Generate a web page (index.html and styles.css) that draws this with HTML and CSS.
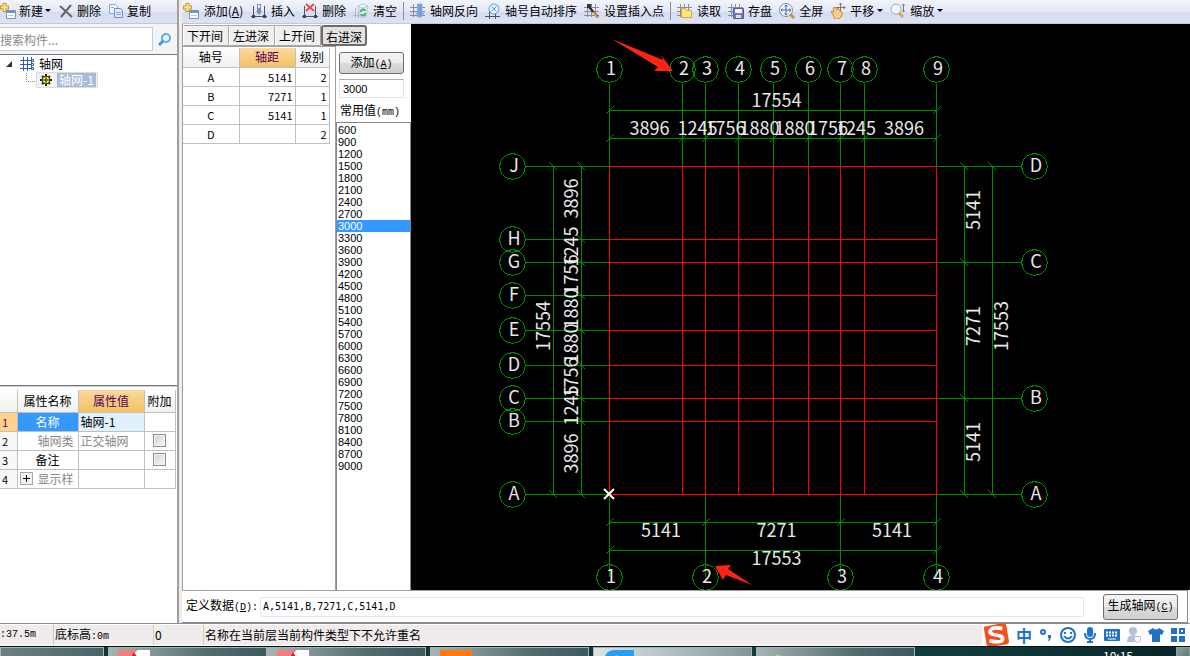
FILE: index.html
```html
<!DOCTYPE html>
<html lang="zh-CN">
<head>
    <meta charset="UTF-8">
    <meta name="viewport" content="width=device-width, initial-scale=1.0">
    <title>轴网</title>
    <link rel="stylesheet" href="styles.css">
</head>
<body>

    <!-- Shared toolbar shapes -->
    <svg class="symbols" width="0" height="0">
        <symbol id="grid" viewBox="0 0 16 16">
            <path d="M3.5 1v13M7.5 1v13M11.5 1v13M0 4.5h15M0 8.5h15M0 12.5h15" fill="none" stroke="#8b8d96"/>
        </symbol>
        <symbol id="new" viewBox="0 0 16 16">
            <path d="M4.5 0v9M0 4.5h9" stroke="#c79a2c" stroke-width="4"/>
            <path d="M4.5 1v7M1 4.5h7" stroke="#ffe68a" stroke-width="2"/>
            <path d="M6.5 7.5h9v8h-9z" fill="#fff" stroke="#7c91bd"/>
            <path d="M7 8h8v2H7z" fill="#6f93d8"/>
            <path d="M8 12.5h6" stroke="#b9c6e4"/>
        </symbol>
        <symbol id="axis" viewBox="0 0 16 16">
            <path d="M2.5 3v10M13.5 3v10M0 13.5h16" fill="none" stroke="#50545e"/>
            <path d="M1 12h3v3H1zM12 12h3v3h-3z" fill="#40444e"/>
        </symbol>
    </svg>

    <main class="app">
        <section class="side">
            <div class="toolbar side-toolbar">
                <button><svg class="icon"><use href="#new"/></svg>新建<i class="caret"></i></button>
                <button><svg class="icon" viewBox="0 0 16 16"><path d="M2 3l12 11M13 2L3 14" stroke="#666" stroke-width="2"/></svg>删除</button>
                <button><svg class="icon" viewBox="0 0 16 16"><path d="M1.5 1.5h6l2 2v7h-8z" fill="#eef5ff" stroke="#86a8d8"/><path d="M6.5 5.5h6l2 2v7h-8z" fill="#dfecff" stroke="#6d91cc"/><path d="M8 9.5h5M8 11.5h5M3 4.5h3" stroke="#86a8d8"/></svg>复制</button>
            </div>
            <div class="search">
                <input type="text" placeholder="搜索构件..." aria-label="搜索构件">
                <button aria-label="搜索"><svg class="icon" viewBox="0 0 16 16"><circle cx="9" cy="7" r="4" fill="#eaf6ff" stroke="#58b0e6" stroke-width="2"/><path d="M6 10l-4 4" stroke="#3c9add" stroke-width="3"/></svg></button>
            </div>
            <div class="tree">
                <div class="tree-row">
                    <svg class="twisty" viewBox="0 0 8 8"><path d="M7 1v6H1z" fill="#333"/></svg>
                    <svg class="icon tree-icon" viewBox="0 0 16 16"><path d="M4.5 1v14M8.5 1v14M12.5 1v11M1 4.5h12M1 8.5h12M1 12.5h12" stroke="#2c5cb0" fill="none"/><path d="M12.500 3.500h2v2h-2zM12.500 7.500h2v2h-2zM12.500 11.500h2v2h-2z" fill="#fff" stroke="#2c5cb0"/></svg>
                    <span>轴网</span>
                </div>
                <div class="tree-row child">
                    <svg class="branch" viewBox="0 0 10 14"><path d="M.5 0v8.500h9" fill="none" stroke="#888" stroke-dasharray="1 1"/></svg>
                    <div class="tree-item">
                        <svg viewBox="0 0 12 12"><path d="M6 0v12M0 6h12M2 2l8 8M10 2l-8 8" stroke="#222" stroke-width="2"/><circle cx="6" cy="6" r="4" fill="#f4ec20" stroke="#222"/><path d="M6 3v6M3 6h6" stroke="#222" stroke-dasharray="2 2"/><circle cx="6" cy="6" r="1" fill="#222"/></svg>
                        <span class="selected">轴网-1</span>
                    </div>
                </div>
            </div>
            <div class="props">
                <table>
                    <colgroup><col class="c-num"><col class="c-name"><col class="c-value"><col class="c-extra"></colgroup>
                    <thead>
                        <tr><th></th><th>属性名称</th><th class="hot">属性值</th><th>附加</th></tr>
                    </thead>
                    <tbody>
                        <tr><td class="num current">1</td><td class="name active">名称</td><td class="value editing">轴网-1</td><td></td></tr>
                        <tr class="muted"><td class="num">2</td><td class="name wide">轴网类</td><td class="value">正交轴网</td><td><input type="checkbox" aria-label="附加轴网类"></td></tr>
                        <tr><td class="num">3</td><td class="name">备注</td><td></td><td><input type="checkbox" aria-label="附加备注"></td></tr>
                        <tr class="muted"><td class="num">4</td><td class="name wide"><button class="expand" aria-label="展开"><svg viewBox="0 0 11 11"><path d="M2 5.500h7M5.500 2v7" stroke="#000"/></svg></button>显示样</td><td></td><td></td></tr>
                    </tbody>
                </table>
            </div>
        </section>

        <section class="work">
            <div class="toolbar">
                <button><svg class="icon"><use href="#new"/></svg><span class="add">添加(<u>A</u>)</span></button>
                <button><svg class="icon" viewBox="0 0 16 16"><use href="#axis"/><path d="M6 1h4v7h1l-3 4-3-4h1z" fill="#7390b8"/><path d="M7 2h2v3H7z" fill="#e8f0ff"/></svg>插入</button>
                <button><svg class="icon" viewBox="0 0 16 16"><use href="#axis"/><path d="M4 1l8 7M12 1L4 8" stroke="#f04848" stroke-width="2"/></svg>删除</button>
                <button><svg class="icon" viewBox="0 0 16 16"><path d="M2.500 5v10M0 12.500h8M5.500 8v7" stroke="#b4b8c4"/><path d="M5 3h10l-2 11H7z" fill="#d9e8ee" stroke="#b8ccd8"/><path d="M5 3l5-2 5 2-5 2z" fill="#f4faff" stroke="#b8ccd8"/><path d="M8 9a2 2 0 0 1 4-1M12 10a2 2 0 0 1-4 1" fill="none" stroke="#4ab860" stroke-width="2"/></svg>清空</button>
                <span class="sep"></span>
                <button><svg class="icon" viewBox="0 0 16 16"><use href="#grid"/><path d="M8 1h4v9h2l-4 5-4-5h2z" fill="#6d9be4" stroke="#8fb1ea"/></svg>轴网反向</button>
                <button><svg class="icon" viewBox="0 0 16 16"><path d="M4.500 8v8M10.500 10v6M0 13.500h15" stroke="#50545e"/><circle cx="9" cy="6" r="5" fill="#e7f3ff" stroke="#5d9ee0"/><path d="M6.500 3.500l5 5M11.500 3.500l-5 5" stroke="#5d9ee0"/></svg>轴号自动排序</button>
                <button><svg class="icon" viewBox="0 0 16 16"><use href="#grid"/><path d="M5 4l9 10" stroke="#222" stroke-width="2"/><path d="M9 9l5 6" stroke="#d8a050" stroke-width="2"/><path d="M3 1h4v4H3z" fill="#333"/></svg>设置插入点</button>
                <span class="sep"></span>
                <button><svg class="icon" viewBox="0 0 16 16"><use href="#grid"/><path d="M4.500 5.500h4l1 2h5v7h-10z" fill="#ffe27a" stroke="#d3a948"/></svg>读取</button>
                <button><svg class="icon" viewBox="0 0 16 16"><use href="#grid"/><path d="M5.500 5.500h10v10h-10z" fill="#7778bd" stroke="#5759a0"/><path d="M7 6h7v4H7z" fill="#f4f4ff"/><path d="M8 12h5v3H8z" fill="#ddd"/></svg>存盘</button>
                <button><svg class="icon" viewBox="0 0 16 16"><path d="M11 11l4 4" stroke="#c8963c" stroke-width="3"/><circle cx="7" cy="7" r="6.500" fill="#eef5ff" stroke="#8090b0"/><path d="M7 2v10M2 7h10M5.500 3.500L7 2l1.500 1.500M5.500 10.500L7 12l1.500-1.500M3.500 5.500L2 7l1.500 1.500M10.500 5.500L12 7l-1.500 1.500" fill="none" stroke="#3b6ab0"/></svg>全屏</button>
                <button><svg class="icon" viewBox="0 0 16 16"><path d="M10.500 0v9M6 4.500h9M9 1.500L10.500 0 12 1.500M13.500 3L15 4.500 13.500 6" fill="none" stroke="#777"/><path d="M1 8l3 1-1-4 2-1 2 3 1-2 2 3 2 1v4l-3 3H5z" fill="#f6cf86" stroke="#c29142"/></svg>平移<i class="caret"></i></button>
                <button><svg class="icon" viewBox="0 0 16 16"><path d="M9 10l4 4" stroke="#e0a850" stroke-width="3"/><circle cx="6" cy="6" r="5" fill="#f2f8ff" stroke="#9aabbf"/><path d="M13.500 1v8M12 2.500L13.500 1 15 2.500M12 7.500L13.500 9 15 7.500" fill="none" stroke="#68788a"/></svg>缩放<i class="caret"></i></button>
            </div>

            <div class="editor">
                <div class="axis-panel">
                    <div class="tabs">
                        <button>下开间</button>
                        <button>左进深</button>
                        <button>上开间</button>
                        <button class="pressed">右进深</button>
                    </div>
                    <div class="axis-body">
                        <div class="axis-table">
                            <table>
                                <colgroup><col class="a-no"><col class="a-dist"><col class="a-level"></colgroup>
                                <thead><tr><th>轴号</th><th class="hot">轴距</th><th>级别</th></tr></thead>
                                <tbody>
                                    <tr><td>A</td><td>5141</td><td>2</td></tr>
                                    <tr><td>B</td><td>7271</td><td>1</td></tr>
                                    <tr><td>C</td><td>5141</td><td>1</td></tr>
                                    <tr><td>D</td><td></td><td>2</td></tr>
                                </tbody>
                            </table>
                        </div>
                        <div class="presets">
                            <button class="push">添加<span class="half">(<u>A</u>)</span></button>
                            <input type="text" value="3000" aria-label="轴距">
                            <label for="presetList">常用值<span class="half">(mm)</span></label>
                            <select id="presetList" size="29">
                                <option>600</option>
                                <option>900</option>
                                <option>1200</option>
                                <option>1500</option>
                                <option>1800</option>
                                <option>2100</option>
                                <option>2400</option>
                                <option>2700</option>
                                <option selected>3000</option>
                                <option>3300</option>
                                <option>3600</option>
                                <option>3900</option>
                                <option>4200</option>
                                <option>4500</option>
                                <option>4800</option>
                                <option>5100</option>
                                <option>5400</option>
                                <option>5700</option>
                                <option>6000</option>
                                <option>6300</option>
                                <option>6600</option>
                                <option>6900</option>
                                <option>7200</option>
                                <option>7500</option>
                                <option>7800</option>
                                <option>8100</option>
                                <option>8400</option>
                                <option>8700</option>
                                <option>9000</option>
                            </select>
                        </div>
                    </div>
                </div>
                <div class="canvas">
                    <svg id="drawing"></svg>
                </div>
            </div>

            <div class="define">
                <label for="defineData">定义数据<span class="half">(<u>D</u>):</span></label>
                <input type="text" id="defineData" value="A,5141,B,7271,C,5141,D">
                <button class="push">生成轴网<span class="half">(<u>C</u>)</span></button>
            </div>
        </section>
    </main>

    <footer class="status">
        <span class="s-floor half">:37.5m</span>
        <span class="s-base">底标高<span class="half">:0m</span></span>
        <span class="s-count">0</span>
        <span class="s-message">名称在当前层当前构件类型下不允许重名</span>
        <div class="ime">
            <svg class="ime-logo" viewBox="0 0 28 28"><path d="M1 5l21-4q2 0 3 2l3 18q0 2-2 3L7 27q-2 0-3-2L1 7z" fill="#f4511e"/><path d="M21 7Q10 5 8 9t6 5q8 1 7 5T7 20" fill="none" stroke="#fff" stroke-width="4"/></svg>
            <span class="ime-lang">中</span>
            <svg viewBox="0 0 16 16"><circle cx="5" cy="5" r="2" fill="none" stroke="#1f72c8" stroke-width="2"/><path d="M10 8h3v3l-2 3h-1l1-3h-1z" fill="#1f72c8"/></svg>
            <svg viewBox="0 0 16 16"><circle cx="8" cy="8" r="7" fill="none" stroke="#1f72c8" stroke-width="2"/><path d="M5 5v2M11 5v2M4 9q4 5 8 0" fill="none" stroke="#1f72c8" stroke-width="2"/></svg>
            <svg viewBox="0 0 16 16"><rect x="5" y="0" width="6" height="10" rx="3" fill="#1f72c8"/><path d="M3 6q0 6 5 6t5-6M8 12v3M5 15h6" fill="none" stroke="#1f72c8" stroke-width="2"/></svg>
            <svg viewBox="0 0 16 16"><rect x="0" y="2" width="16" height="12" rx="1" fill="#1f72c8"/><path d="M2 5.500h12M2 8.500h12" stroke="#fff" stroke-width="2" stroke-dasharray="2 1"/><path d="M4 12h8" stroke="#fff"/></svg>
            <svg viewBox="0 0 16 16"><circle cx="7" cy="4" r="4" fill="#b4c1d6"/><path d="M1 15q0-7 6-7t6 7z" fill="#b4c1d6"/><path d="M8.500 9.500h6v3q0 2-3 3-3-1-3-3z" fill="#fff" stroke="#b4c1d6"/></svg>
            <svg viewBox="0 0 16 16"><path d="M5 1q3 3 6 0l5 3-2 4-2-1v8H4V7L2 8 0 4z" fill="#1f72c8"/></svg>
            <svg viewBox="0 0 16 16"><path d="M1 1h6v6H1zM1 9h6v6H1zM9 9h6v6H9z" fill="#1f72c8"/><path d="M10 2h4v4h-4z" fill="none" stroke="#1f72c8" stroke-width="2"/></svg>
        </div>
    </footer>

    <div class="taskbar">
        <div class="task first"></div>
        <div class="task-group">
            <div class="task"><svg viewBox="0 0 32 10"><path d="M0 0h32v10H0z" fill="#fff"/><path d="M0 0h20L8 10H0z" fill="#f08080"/><path d="M16 2l5 8H11z" fill="#d02818"/></svg></div>
            <div class="task"><svg viewBox="0 0 32 10"><path d="M0 0h32v10H0z" fill="#fff"/><path d="M0 0h20L8 10H0z" fill="#f08080"/><path d="M16 2l5 8H11z" fill="#d02818"/></svg></div>
        </div>
        <div class="task"><svg viewBox="0 0 32 10"><path d="M0 0h32v10H0z" fill="#ff7a10"/></svg></div>
        <div class="task bright"><svg viewBox="0 0 32 10"><path d="M1 10Q2 0 12 0h19v10z" fill="#2b9cf4"/><path d="M9 10q4-9 10 0z" fill="#e8f6ff"/></svg></div>
        <div class="task"><svg viewBox="0 0 32 10"><path d="M5 10q7-11 14 0z" fill="#9be25c"/></svg></div>
        <span class="clock">10:15</span>
        <div class="desktop"></div>
    </div>

    <script>
        const svg = document.getElementById('drawing');

        // axis positions on the canvas
        const topX = [198, 271, 294, 327, 362, 397, 429, 453, 525];
        const bottomX = [198, 294, 429, 525];
        const leftY = [142, 215, 238, 271, 306, 341, 374, 397, 470];
        const rightY = [142, 238, 374, 470];
        const left = 198, right = 525, top1 = 142, bottom = 470;

        function add(tag, cls, attrs, text) {
            const el = document.createElementNS('http://www.w3.org/2000/svg', tag);
            if (cls) el.setAttribute('class', cls);
            for (const key in attrs) el.setAttribute(key, attrs[key]);
            if (text) el.textContent = text;
            svg.appendChild(el);
        }

        function line(cls, x1, y1, x2, y2) {
            add('line', cls, { x1: x1 + 0.5, y1: y1 + 0.5, x2: x2 + 0.5, y2: y2 + 0.5 });
        }

        // axis bubble, a twelve-sided ring
        function bubble(x, y, name) {
            const points = [];
            for (let i = 0; i < 12; i++) {
                const a = i * Math.PI / 6;
                points.push((x + 0.5 + 13 * Math.cos(a)).toFixed(1) + ',' + (y + 0.5 + 13 * Math.sin(a)).toFixed(1));
            }
            add('polygon', 'green', { points: points.join(' ') });
            add('text', 'label', { x: x + 2, y: y + 6 }, name);
        }

        // dimension chain along x
        function dimX(xs, y, values, textY) {
            line('green', xs[0], y, xs[xs.length - 1], y);
            xs.forEach(x => line('green', x - 4, y + 4, x + 4, y - 4));
            values.forEach((v, i) => add('text', 'label', { x: (xs[i] + xs[i + 1]) / 2 + 4, y: textY }, v));
        }

        // dimension chain along y, text turned upwards
        function dimY(ys, x, values, textX) {
            line('green', x, ys[0], x, ys[ys.length - 1]);
            ys.forEach(y => line('green', x - 4, y - 4, x + 4, y + 4));
            values.forEach((v, i) => {
                const y = (ys[i] + ys[i + 1]) / 2 - 4;
                add('text', 'label', { transform: `translate(${textX} ${y}) rotate(-90)` }, v);
            });
        }

        topX.forEach((x, i) => {
            line('green', x, 59, x, top1);
            bubble(x, 45, String(i + 1));
        });
        bottomX.forEach((x, i) => {
            line('green', x, bottom, x, 552);
            bubble(x, 553, String(i + 1));
        });
        leftY.forEach((y, i) => {
            line('green', 114, y, left, y);
            bubble(101, y, 'JHGFEDCBA'[i]);
        });
        rightY.forEach((y, i) => {
            line('green', right, y, 610, y);
            bubble(623, y, 'DCBA'[i]);
        });

        const spans = ['3896', '1245', '1756', '1880', '1880', '1756', '1245', '3896'];
        dimX([left, right], 86, ['17554'], 83);
        dimX(topX, 114, spans, 111);
        dimX(bottomX, 498, ['5141', '7271', '5141'], 513);
        dimX([left, right], 526, ['17553'], 541);
        dimY([top1, bottom], 142, ['17554'], 139);
        dimY(leftY, 170, spans, 167);
        dimY(rightY, 553, ['5141', '7271', '5141'], 569);
        dimY([top1, bottom], 581, ['17553'], 597);

        topX.forEach(x => line('red', x, top1, x, bottom));
        leftY.forEach(y => line('red', left, y, right, y));

        // insertion point
        add('path', 'cross', { d: 'M193 465l10 10M203 465l-10 10' });

        // callout arrows
        add('polygon', 'arrow', { points: '201,15 252,36 250,31 262,47 243,47 247,43' });
        add('polygon', 'arrow', { points: '304,542 320,541 317,545 341,561 315,551 312,556' });
    </script>

</body>
</html>
```

FILE: styles.css
```css
* {
    box-sizing: border-box;
}
body {
    margin: 0;
    height: 100vh;
    display: flex;
    flex-direction: column;
    overflow: hidden;
    font-family: "Noto Sans CJK SC", sans-serif;
    font-size: 12px;
    line-height: 18px;
    color: #000;
    background: #f0eceb;
}
button, input, select {
    font: inherit;
    color: inherit;
    margin: 0;
    padding: 0;
}
button {
    border: none;
    background: none;
    white-space: nowrap;
}
svg {
    display: block;
    flex: none;
}
.symbols {
    position: absolute;
}
/* Half-width characters next to Chinese text */
.half {
    font-family: "Liberation Mono", monospace;
    font-size: 10px;
}
.app {
    flex: 1;
    min-height: 0;
    display: flex;
    border-bottom: 1px solid #8a8a90;
}

/* Toolbars */
.toolbar {
    flex: none;
    height: 24px;
    display: flex;
    align-items: center;
    gap: 7px;
    padding: 0 1px 2px;
    background: linear-gradient(#f2f4fb, #e3e8f6 50%, #d6dcf0 55%, #dee3f4);
    border-bottom: 1px solid #c4c8d4;
}
.side-toolbar {
    padding-left: 0;
}
.toolbar button {
    display: flex;
    align-items: center;
    gap: 4px;
}
.side-toolbar button {
    gap: 3px;
}
.icon {
    width: 16px;
    height: 16px;
}
.add {
    width: 41px;
}
.caret {
    margin-left: -1px;
    border: 3px solid transparent;
    border-top-color: #000;
    border-bottom: none;
}
.sep {
    width: 1px;
    height: 18px;
    margin: 0 -1px;
    background: #8b8f9c;
}

/* Left side */
.side {
    flex: 0 0 179px;
    display: flex;
    flex-direction: column;
    background: #fff;
    border-right: 2px solid #a0a0a0;
}
.search {
    height: 30px;
    display: flex;
    align-items: center;
    gap: 4px;
    background: #f4f4f6;
}
.search input {
    width: 153px;
    height: 24px;
    border: 1px solid #c4ccd6;
    border-left: none;
    background: #fff;
}
.search input::placeholder {
    color: #888;
}
.tree {
    flex: 1;
    border-top: 1px solid #70747c;
    border-bottom: 1px solid #70747c;
    padding-top: 1px;
}
.tree-row {
    display: flex;
    align-items: center;
    height: 16px;
    padding-left: 5px;
}
.twisty {
    width: 8px;
    height: 8px;
    margin-right: 6px;
}
.tree-icon {
    margin-right: 4px;
}
.child {
    padding-left: 26px;
}
.branch {
    width: 10px;
    height: 14px;
}
.tree-item {
    display: flex;
    align-items: center;
    gap: 5px;
    height: 16px;
    padding: 0 1px 0 3px;
    border: 1px solid #dcdcdc;
    border-radius: 2px;
    background: #f2f2f2;
}
.tree-item svg {
    width: 12px;
    height: 12px;
}
.selected {
    height: 14px;
    line-height: 14px;
    padding: 0 2px;
    color: #fff;
    background: #a9bbdb;
}

/* Tables */
table {
    border-collapse: collapse;
    table-layout: fixed;
}
th, td {
    height: 19px;
    padding: 0 2px;
    line-height: 14px;
    border: 1px solid #c0c0c0;
    overflow: hidden;
    white-space: nowrap;
}
th {
    font-weight: normal;
    border-top: none;
    background: linear-gradient(#fff, #f0f0f0);
}
th.hot {
    color: #5c005c;
    background: linear-gradient(#f9d99f, #f2c163);
}
.props {
    flex: 0 0 237px;
    padding-top: 3px;
    border-top: 1px solid #d0d0d4;
}
.props table {
    width: 175px;
    border-left: hidden;
}
.props th {
    height: 22px;
    padding: 0;
}
.c-num {
    width: 17px;
}
.c-name {
    width: 61px;
}
.c-value {
    width: 66px;
}
.c-extra {
    width: 31px;
}
.props .num {
    padding: 0 7px 0 2px;
    font-size: 11px;
    background: #f7f7f7;
}
.props .current {
    color: #5c005c;
    background: #ffd28c;
}
.props .name {
    text-align: center;
}
.props .wide {
    text-align: right;
    padding-right: 4px;
}
.props .active {
    color: #fff;
    background: #3399ff;
}
.props .editing {
    background: #e1f0ff;
}
.props .muted .name,
.props .muted .value {
    color: #888;
}
.props input {
    display: block;
    appearance: none;
    width: 13px;
    height: 13px;
    margin: 0 auto;
    border: 1px solid #8e8f8f;
    background: linear-gradient(135deg, #cfd3d8, #f8f8f8);
    box-shadow: inset 0 0 0 1px #f4f4f4;
}
.expand {
    float: left;
    width: 13px;
    height: 13px;
    border: 1px solid #a8a8a8;
    background: #f4f4f4;
}

/* Work area */
.work {
    flex: 1;
    min-width: 0;
    display: flex;
    flex-direction: column;
    margin-left: 3px;
    background: #fff;
}
.editor {
    flex: 1;
    min-height: 0;
    display: flex;
}
.axis-panel {
    flex: 0 0 229px;
    display: flex;
    flex-direction: column;
    border-left: 1px solid #a0a0a0;
}
.tabs {
    display: flex;
    padding-top: 1px;
}
.tabs button {
    width: 46px;
    height: 21px;
    line-height: 19px;
    padding-right: 2px;
    border: 1px solid #a8a8a8;
    border-left-color: #fff;
    background: #f0f0f0;
}
.tabs .pressed {
    padding: 0;
    border: 2px solid #6c6c6c;
    border-radius: 3px;
    background: #e2e2e2;
}
.axis-body {
    flex: 1;
    display: flex;
}
.axis-table {
    flex: 1;
    padding-top: 1px;
    border-top: 1px solid #a0a0a0;
}
.axis-table table {
    width: 146px;
    border-left: hidden;
}
.a-no {
    width: 56px;
}
.a-dist {
    width: 56px;
}
.a-level {
    width: 34px;
}
.axis-table td {
    font-size: 11px;
    text-align: right;
}
.axis-table td:first-child {
    text-align: center;
}
.presets {
    flex: 0 0 76px;
    display: flex;
    flex-direction: column;
    padding-top: 6px;
    border-left: 1px solid #a0a0a0;
}
.push {
    height: 22px;
    line-height: 18px;
    border: 1px solid #707070;
    border-radius: 3px;
    background: linear-gradient(#f4f4f4, #ebebeb 50%, #dcdcdc 50%, #cfcfcf);
}
.presets .push,
.presets input {
    width: 65px;
    margin-left: 3px;
}
.presets input {
    height: 19px;
    margin-top: 5px;
    padding: 0 3px;
    font-family: "Liberation Sans", sans-serif;
    font-size: 11px;
    border: 1px solid #e0e4ee;
    border-top-color: #abadb3;
}
.presets label {
    height: 24px;
    line-height: 24px;
    padding-left: 4px;
}
.presets select {
    flex: 1;
    padding: 1px 0;
    font-family: "Liberation Sans", sans-serif;
    font-size: 11px;
    border: 1px solid #828790;
    border-bottom: none;
    border-radius: 0;
    background: #fff;
    overflow: hidden;
    outline: none;
}
.presets option {
    height: 12px;
    min-height: 12px;
    line-height: 12px;
    padding: 0 1px;
}
.presets option:checked {
    color: #fff;
    background: #3399ff linear-gradient(#3399ff, #3399ff);
}

/* Drawing */
.canvas {
    flex: 1;
    min-width: 0;
    background: #000;
    overflow: hidden;
}
.canvas svg {
    width: 100%;
    height: 100%;
}
.green {
    fill: none;
    stroke: #008a00;
    shape-rendering: crispEdges;
}
.red {
    stroke: #ff0000;
    shape-rendering: crispEdges;
}
.label {
    fill: #e8e8e8;
    font-size: 18px;
    text-anchor: middle;
}
.cross {
    stroke: #fff;
    stroke-width: 2px;
}
.arrow {
    fill: #ff2314;
}

/* Bottom rows */
.define {
    flex: none;
    height: 33px;
    display: flex;
    align-items: center;
    gap: 4px;
    margin-right: 2px;
    padding: 0 9px 0 4px;
    border-top: 1px solid #a0a0a0;
    border-right: 1px solid #8a8a90;
    border-bottom: 1px solid #8a8a90;
}
.define label {
    width: 70px;
    white-space: nowrap;
}
.define input {
    flex: 1;
    height: 20px;
    padding: 0 2px;
    font-family: "DejaVu Sans Mono", monospace;
    font-size: 10px;
    border: 1px solid #e0e6ee;
    border-radius: 2px;
}
.define .push {
    width: 75px;
    height: 26px;
    margin-left: 15px;
}
.status {
    flex: none;
    height: 22px;
    display: flex;
    align-items: center;
    line-height: 20px;
    border-top: 1px solid #fff;
    border-bottom: 1px solid #fff;
}
.status > span {
    padding-left: 1px;
    border-left: 1px solid #d0cccb;
    white-space: nowrap;
}
.status .s-floor {
    width: 53px;
    padding: 0;
    border: none;
}
.s-base {
    width: 100px;
}
.s-count {
    width: 50px;
}
.ime {
    display: flex;
    align-items: center;
    gap: 6px;
    height: 22px;
    margin-left: auto;
    padding-right: 4px;
    background: #fff;
}
.ime svg {
    width: 16px;
    height: 16px;
}
.ime .ime-logo {
    width: 28px;
    height: 26px;
}
.ime-lang {
    color: #1f72c8;
    font-size: 16px;
    font-weight: bold;
}

/* Taskbar */
.taskbar {
    flex: none;
    height: 10px;
    display: flex;
    gap: 4px;
    overflow: hidden;
    background: linear-gradient(90deg, #123234, #123c3c 80%, #0a2426);
    border-top: 1px solid #001414;
}
.task-group {
    display: flex;
}
.task {
    width: 159px;
    height: 40px;
    padding: 2px 9px;
    border: 1px solid #a4b4b6;
    background: linear-gradient(100deg, #a8b4b4, #526c70 60%, #3c585c);
}
.task.first {
    width: 104px;
    background: linear-gradient(90deg, #6d8084, #486468);
}
.task.bright {
    background: linear-gradient(100deg, #dce4e4, #a8b6b8 60%, #7c9294);
}
.task svg {
    width: 32px;
    height: 10px;
}
.clock {
    margin: 1px 43px 0 auto;
    color: #fff;
    font-size: 12px;
    line-height: 16px;
}
.desktop {
    width: 14px;
    height: 40px;
    margin-left: -4px;
    border: 1px solid #8ca0a2;
    background: linear-gradient(135deg, #8a9c9e, #2c4648);
}
```
